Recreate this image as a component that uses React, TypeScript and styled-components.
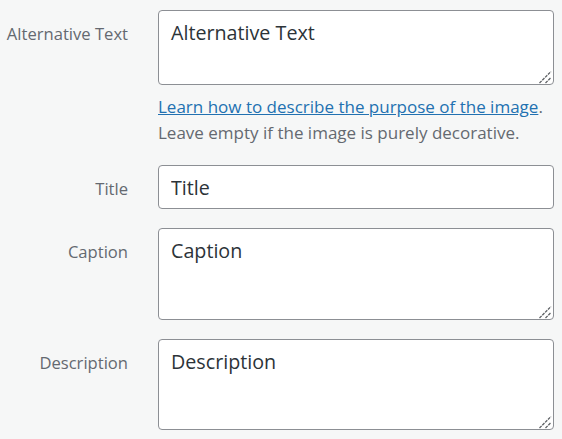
import React from "react";
import styled, { createGlobalStyle } from "styled-components";

const GlobalStyle = createGlobalStyle`
  html, body {
    margin: 0;
    padding: 0;
    background: #f6f7f7;
  }
  * { box-sizing: border-box; }
`;

const Page = styled.div`
  min-height: 100vh;
  background: #f6f7f7;
  padding: 10px 8px 0 0;
  font-family: "Open Sans", "Noto Sans", sans-serif;
  display: flex;
  flex-direction: column;
  gap: 19px;
`;

const Row = styled.div`
  display: grid;
  grid-template-columns: 128px 1fr;
  column-gap: 30px;
  align-items: start;
`;

const Label = styled.label`
  text-align: right;
  color: #646970;
  font-size: 16.6px;
  line-height: normal;
  padding-top: 12px;
`;

const Field = styled.div`
  display: flex;
  flex-direction: column;
  min-width: 0;
`;

const AreaWrap = styled.div`
  position: relative;
`;

const TextArea = styled.textarea<{ $h: number }>`
  display: block;
  width: 100%;
  height: ${(p) => p.$h}px;
  margin: 0;
  padding: 7px 12px;
  border: 1px solid #8c8f94;
  border-radius: 4px;
  background: #fff;
  color: #2c3338;
  font-family: "Open Sans", "Noto Sans", sans-serif;
  font-size: 19.7px;
  line-height: 1.5;
  resize: none;
  outline: none;
`;

const Grip = styled.svg`
  position: absolute;
  right: 0;
  bottom: 0;
  width: 16px;
  height: 16px;
  pointer-events: none;
`;

const TextInput = styled.input`
  display: block;
  width: 100%;
  height: 44px;
  margin: 0;
  padding: 1px 12px 0;
  border: 1px solid #8c8f94;
  border-radius: 4px;
  background: #fff;
  color: #2c3338;
  font-family: "Open Sans", "Noto Sans", sans-serif;
  font-size: 19.7px;
  outline: none;
`;

const Help = styled.div`
  margin-top: 9px;
  color: #646970;
  font-size: 17px;
  line-height: 26px;
`;

const HelpLine = styled.p`
  margin: 0;
  white-space: nowrap;
`;

const HelpLink = styled.a`
  color: #2271b1;
  text-decoration: underline;
`;

function ResizableArea({ h, value }: { h: number; value: string }) {
  return (
    <AreaWrap>
      <TextArea $h={h} defaultValue={value} />
      <Grip viewBox="0 0 16 16">
        <line x1="1.5" y1="14" x2="13" y2="2.5" stroke="#5c5f63" strokeWidth="1.3" strokeDasharray="3 1" />
        <line x1="7.5" y1="14" x2="13" y2="8.5" stroke="#5c5f63" strokeWidth="1.3" strokeDasharray="3 1" />
      </Grip>
    </AreaWrap>
  );
}

export default function App() {
  return (
    <>
      <GlobalStyle />
      <Page>
        <Row>
          <Label>Alternative Text</Label>
          <Field>
            <ResizableArea h={75} value="Alternative Text" />
            <Help>
              <HelpLine>
                <HelpLink href="#">Learn how to describe the purpose of the image</HelpLink>.
              </HelpLine>
              <HelpLine>Leave empty if the image is purely decorative.</HelpLine>
            </Help>
          </Field>
        </Row>
        <Row>
          <Label>Title</Label>
          <Field>
            <TextInput defaultValue="Title" />
          </Field>
        </Row>
        <Row>
          <Label>Caption</Label>
          <Field>
            <ResizableArea h={92} value="Caption" />
          </Field>
        </Row>
        <Row>
          <Label>Description</Label>
          <Field>
            <ResizableArea h={91} value="Description" />
          </Field>
        </Row>
      </Page>
    </>
  );
}
